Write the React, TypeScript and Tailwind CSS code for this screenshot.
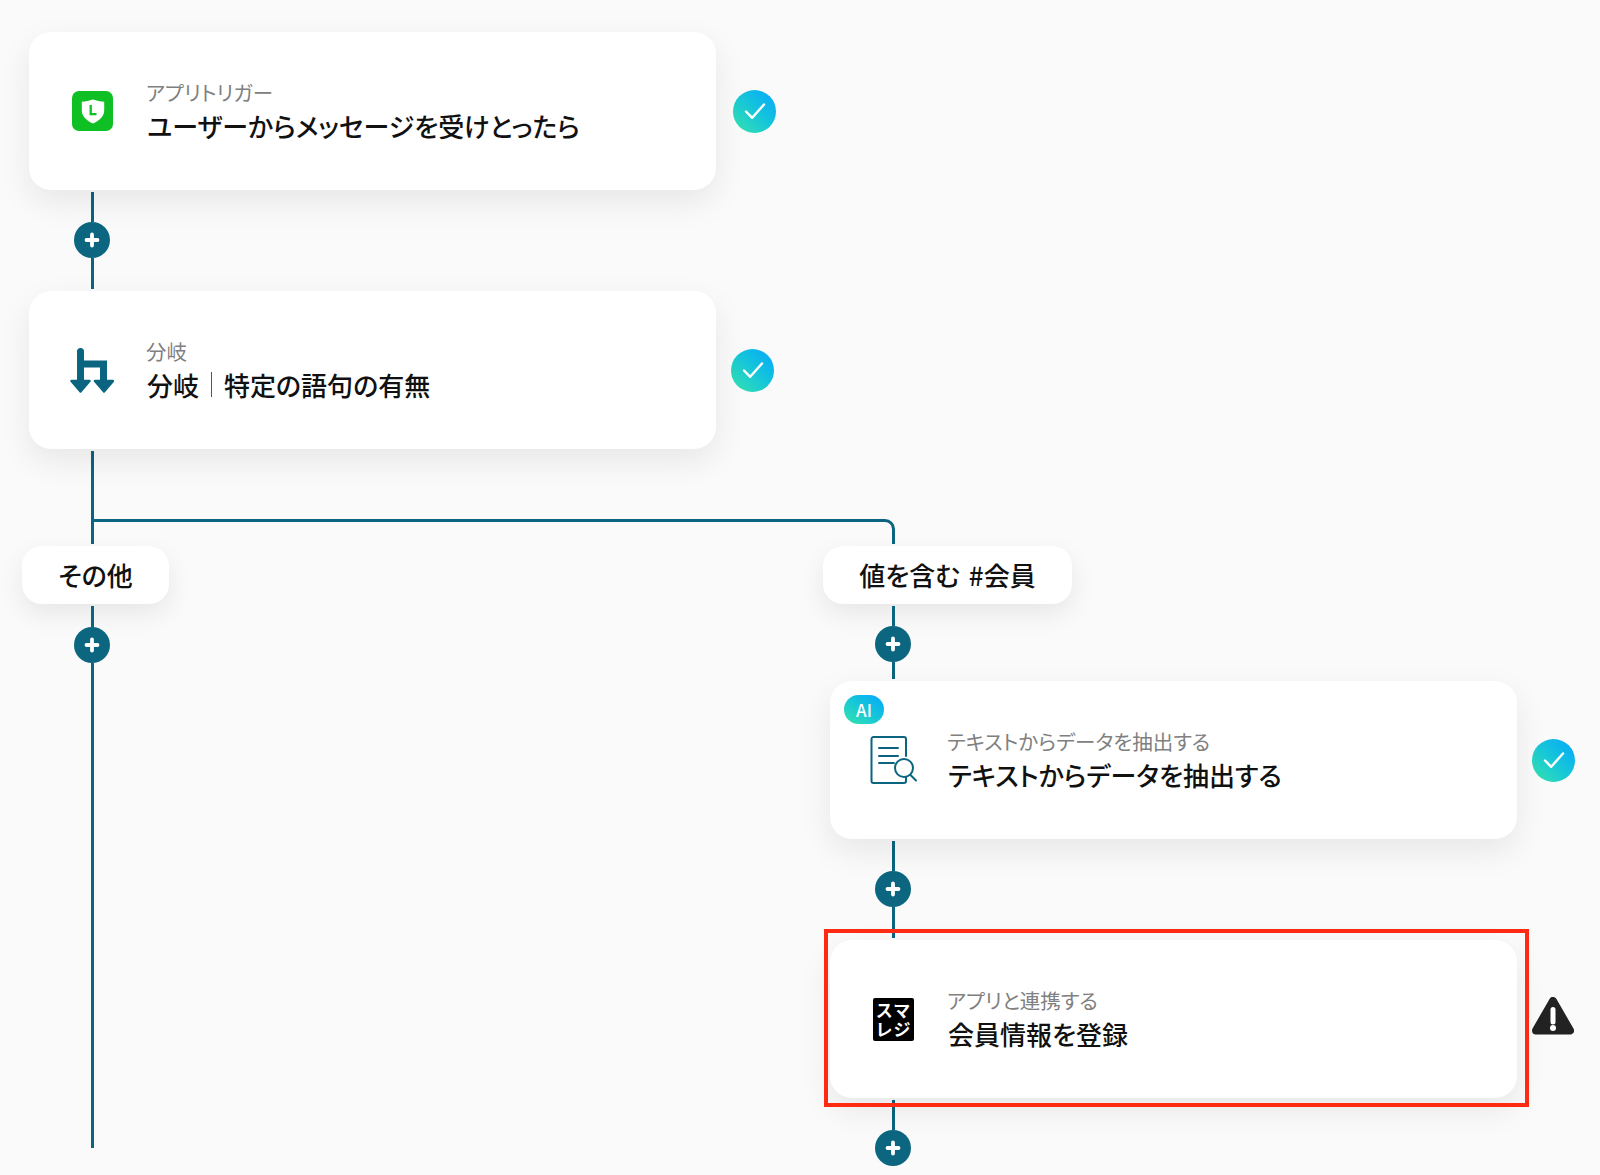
import type { ReactNode } from 'react';

function Plus() {
  return (
    <div className="flex h-[36px] w-[36px] shrink-0 items-center justify-center rounded-full bg-[#0c6680]">
      <svg width="16" height="16" viewBox="0 0 16 16">
        <path d="M8 2.500v11M2.500 8h11" stroke="#fff" strokeWidth="3.800" strokeLinecap="round" />
      </svg>
    </div>
  );
}

function Line({ className }: { className: string }) {
  return <div className={`w-[3px] bg-[#0b6480] ${className}`} />;
}

function Check({ className }: { className: string }) {
  return (
    <div className={`flex h-[43px] w-[43px] shrink-0 items-center justify-center rounded-full bg-linear-to-tr from-[#2ddbb8] from-15% to-[#0cb0f2] to-85% ${className}`}>
      <svg width="24" height="20" viewBox="0 0 24 20" fill="none">
        <path d="M3 10.500l6.200 6.300L21 3.500" stroke="#fff" strokeWidth="2.400" strokeLinecap="round" strokeLinejoin="round" />
      </svg>
    </div>
  );
}

function LineIcon() {
  return (
    <div className="flex h-[40px] w-[41px] items-center justify-center rounded-[7px] bg-[#0fc024]">
      <svg width="24" height="25" viewBox="0 0 24 25">
        <path d="M12 0.500C8.500 1.800 4.500 2.500 0.800 2.700V11.500C0.800 17.500 6 22 12 24.500C18 22 23.200 17.500 23.200 11.500V2.700C19.500 2.500 15.500 1.800 12 0.500Z" fill="#fff" />
        <path d="M9.700 6V15.200H15.500" stroke="#0fc024" strokeWidth="2.300" fill="none" />
      </svg>
    </div>
  );
}

function BranchIcon() {
  return (
    <svg width="44" height="45" viewBox="0 0 44 45" className="-ml-[2px]">
      <path d="M10.500 3.500V33M10.500 16H33.500V33" stroke="#0b6480" strokeWidth="7" fill="none" strokeLinecap="round" />
      <path d="M1.500 33H19.500L10.500 43.500Z" fill="#0b6480" stroke="#0b6480" strokeWidth="2.500" strokeLinejoin="round" />
      <path d="M25 33H43L34 43.500Z" fill="#0b6480" stroke="#0b6480" strokeWidth="2.500" strokeLinejoin="round" />
    </svg>
  );
}

function DocIcon() {
  return (
    <svg width="48" height="50" viewBox="0 0 48 50" fill="none" stroke="#0b6480" strokeWidth="2" strokeLinecap="round" className="-ml-[3px]">
      <path d="M36 21V4a2 2 0 0 0-2-2H3.500a2 2 0 0 0-2 2V46a2 2 0 0 0 2 2H34a2 2 0 0 0 2-2V42" />
      <path d="M9 13H28M9 21H28M9 28H24" />
      <circle cx="34" cy="33" r="9" />
      <path d="M40.500 40L46 45.500" />
    </svg>
  );
}

function RegiIcon() {
  return (
    <div className="flex h-[43px] w-[41px] flex-col items-center justify-center rounded-[2px] bg-black text-[17px] font-bold leading-[19px] tracking-[1px] text-white [font-feature-settings:normal]">
      <span>スマ</span>
      <span>レジ</span>
    </div>
  );
}

function WarningIcon() {
  return (
    <svg width="42" height="38" viewBox="0 0 42 38" className="-mt-[7px] ml-[15px] shrink-0">
      <path d="M21 4L38 33.500H4Z" fill="#222" stroke="#222" strokeWidth="8" strokeLinejoin="round" />
      <path d="M21 12.500V25" stroke="#fff" strokeWidth="5" strokeLinecap="round" />
      <circle cx="21" cy="31" r="3" fill="#fff" />
    </svg>
  );
}

function Card({ icon, sub, title, children }: { icon: ReactNode; sub: string; title: ReactNode; children?: ReactNode }) {
  return (
    <div className="relative flex h-[158px] w-[687px] shrink-0 items-center rounded-[22px] bg-white pl-[43px] shadow-[0_12px_32px_rgba(0,0,0,0.08)]">
      <div className="flex w-[75px] shrink-0 items-center">{icon}</div>
      <div className="-mt-[1px] flex flex-col">
        <div className="-ml-[1px] text-[20.5px] leading-[30px] text-[#808080]">{sub}</div>
        <div className="text-[26px] font-medium leading-[38px] text-[#111]">{title}</div>
      </div>
      {children}
    </div>
  );
}

function Pill({ className, children }: { className: string; children: ReactNode }) {
  return (
    <div className={`flex h-[58px] items-center justify-center rounded-[20px] bg-white pb-[2px] text-[26px] font-medium text-[#111] [word-spacing:3px] shadow-[0_10px_26px_rgba(0,0,0,0.08)] ${className}`}>
      {children}
    </div>
  );
}

// connector between two nodes: line, plus button, line
function Connector({ top, bottom, className }: { top: string; bottom: string; className?: string }) {
  return (
    <div className={`flex w-[36px] flex-col items-center ${className ?? ''}`}>
      <Line className={`ml-[1px] ${top}`} />
      <Plus />
      <Line className={`ml-[1px] ${bottom}`} />
    </div>
  );
}

export default function App() {
  return (
    <div className="h-[1175px] w-[1600px] overflow-hidden bg-[#fafafa] pt-[32px] font-['Noto_Sans_CJK_JP',sans-serif] [font-feature-settings:'palt']">
      <div className="pl-[29px]">
        <div className="flex items-center">
          <Card icon={<LineIcon />} sub="アプリトリガー" title="ユーザーからメッセージを受けとったら" />
          <Check className="ml-[17px]" />
        </div>
        <Connector top="h-[30px]" bottom="h-[31px]" className="my-[2px] ml-[45px]" />
        <div className="flex items-center">
          <Card
            icon={<BranchIcon />}
            sub="分岐"
            title={
              <span className="flex items-center">
                分岐
                <span className="mx-[12px] h-[25px] w-px bg-[#555]" />
                特定の語句の有無
              </span>
            }
          />
          <Check className="ml-[15px]" />
        </div>
      </div>

      <div className="my-[2px] flex h-[93px] pl-[91px]">
        <Line className="h-full" />
        <div className="mt-[68px] h-[25px] w-[801px] rounded-tr-[10px] border-t-[3px] border-r-[3px] border-[#0b6480]" />
      </div>

      <div className="flex pl-[22px]">
        <div className="w-[801px] shrink-0">
          <Pill className="w-[147px]">その他</Pill>
          <Connector top="h-[21px]" bottom="h-[485px]" className="mt-[2px] ml-[52px]" />
        </div>
        <div>
          <Pill className="w-[249px]">値を含む #会員</Pill>
          <Connector top="h-[20px]" bottom="h-[17px]" className="my-[2px] ml-[52px]" />
          <div className="ml-[7px] flex items-center">
            <Card icon={<DocIcon />} sub="テキストからデータを抽出する" title="テキストからデータを抽出する">
              <div className="absolute top-[14px] left-[14px] flex h-[29px] w-[40px] items-center justify-center rounded-full bg-linear-to-tr from-[#2ddbb8] from-15% to-[#0cb0f2] to-85% text-[17px] font-medium text-white">
                AI
              </div>
            </Card>
            <Check className="ml-[15px]" />
          </div>
          <Connector top="h-[30px]" bottom="h-[31px]" className="my-[2px] ml-[52px]" />
          <div className="ml-[7px] flex items-center">
            <Card icon={<RegiIcon />} sub="アプリと連携する" title="会員情報を登録">
              <div className="absolute -top-[11px] -right-[12px] -bottom-[9px] -left-[6px] border-4 border-[#ff2a12]" />
            </Card>
            <WarningIcon />
          </div>
          <Connector top="h-[30px]" bottom="h-0" className="mt-[2px] ml-[52px]" />
        </div>
      </div>
    </div>
  );
}
